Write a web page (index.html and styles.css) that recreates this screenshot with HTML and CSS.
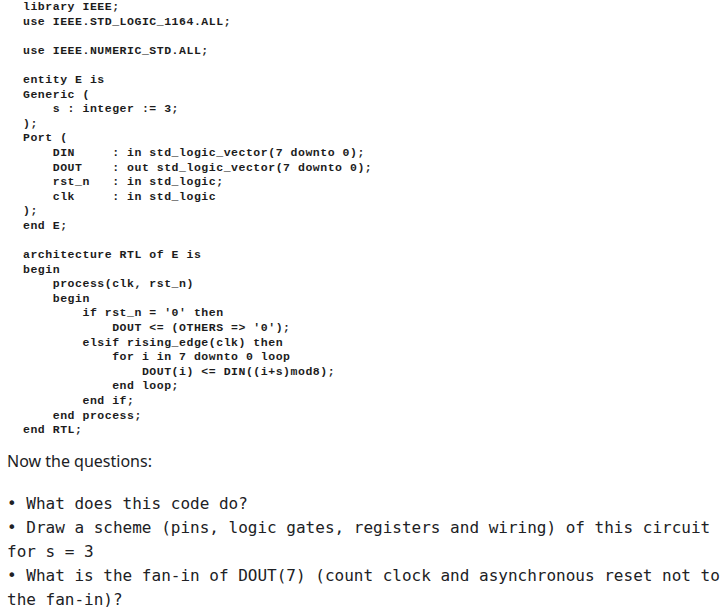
FILE: index.html
```html
<!DOCTYPE html>
<html>
<head>
<meta charset="utf-8">
<link rel="stylesheet" href="styles.css">
</head>
<body>
<div class="page">
<pre class="code">library IEEE;
use IEEE.STD_LOGIC_1164.ALL;

use IEEE.NUMERIC_STD.ALL;

entity E is
Generic (
    s : integer := 3;
);
Port (
    DIN     : in std_logic_vector(7 downto 0);
    DOUT    : out std_logic_vector(7 downto 0);
    rst_n   : in std_logic;
    clk     : in std_logic
);
end E;

architecture RTL of E is
begin
    process(clk, rst_n)
    begin
        if rst_n = '0' then
            DOUT &lt;= (OTHERS =&gt; '0');
        elsif rising_edge(clk) then
            for i in 7 downto 0 loop
                DOUT(i) &lt;= DIN((i+s)mod8);
            end loop;
        end if;
    end process;
end RTL;</pre>
<p class="lead">Now the questions:</p>
<ul class="questions">
<li>• What does this code do?</li>
<li>• Draw a scheme (pins, logic gates, registers and wiring) of this circuit for s = 3</li>
<li>• What is the fan-in of DOUT(7) (count clock and asynchronous reset not to the fan-in)?</li>
</ul>
</div>
</body>
</html>
```
FILE: styles.css
```css
html, body {
  margin: 0;
  padding: 0;
  background: #ffffff;
}
.page {
  padding-left: 7px;
  width: 715px;
}
.code {
  margin: 0;
  padding: 0 0 0 16px;
  font-family: "Liberation Mono", monospace;
  font-weight: bold;
  font-size: 11.5px;
  letter-spacing: 0.53px;
  line-height: 14.59px;
  color: #1c1c1c;
}
.lead {
  margin: 11px 0 0 0;
  font-family: "Noto Sans", sans-serif;
  font-size: 16px;
  line-height: 24px;
  color: #202124;
}
.questions {
  list-style: none;
  margin: 19px 0 0 0;
  padding: 0;
  font-family: "DejaVu Sans Mono", monospace;
  font-size: 16px;
  line-height: 24px;
  color: #202124;
}
.questions li {
  margin: 0;
}
```
